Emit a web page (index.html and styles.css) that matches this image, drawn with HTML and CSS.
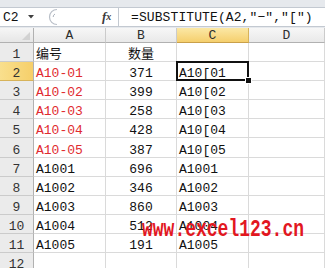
FILE: index.html
```html
<!DOCTYPE html>
<html lang="zh-CN">
<head>
<meta charset="utf-8">
<title>SUBSTITUTE</title>
<link rel="stylesheet" href="styles.css">
</head>
<body>
<div class="app">
  <div class="top-strip"></div>
  <div class="formula-bar">
    <div class="name-box">
      <span class="name">C2</span>
      <svg class="drop" width="6" height="4" viewBox="0 0 6 4"><path d="M0 0H6L3 3.5Z" fill="#404040"/></svg>
    </div>
    <div class="grip">
      <svg width="14" height="18" viewBox="0 0 14 18"><path d="M13 1.5A7.5 7.5 0 0 0 13 16.5" fill="none" stroke="#b9bfc8" stroke-width="1.2"/><path d="M11 6A3.2 3.2 0 0 0 9.2 9" fill="none" stroke="#a9b0ba" stroke-width="1"/></svg>
    </div>
    <div class="fx"><span class="f">f</span><span class="x">x</span></div>
    <div class="formula">=SUBSTITUTE(A2,″−″,″[″)</div>
  </div>
  <div class="band"></div>

  <div class="sheet">
    <div class="corner"><svg width="8" height="8" viewBox="0 0 8 8"><path d="M8 0V8H0Z" fill="#d2d2d2"/></svg></div>
    <div class="col-head">A</div>
    <div class="col-head">B</div>
    <div class="col-head selected">C</div>
    <div class="col-head">D</div>

    <div class="row-head">1</div>
    <div class="cell">编号</div><div class="cell num">数量</div><div class="cell"></div><div class="cell"></div>

    <div class="row-head selected">2</div>
    <div class="cell red">A10-01</div><div class="cell num">371</div><div class="cell active">A10[01<span class="handle"></span></div><div class="cell"></div>

    <div class="row-head">3</div>
    <div class="cell red">A10-02</div><div class="cell num">399</div><div class="cell">A10[02</div><div class="cell"></div>

    <div class="row-head">4</div>
    <div class="cell red">A10-03</div><div class="cell num">258</div><div class="cell">A10[03</div><div class="cell"></div>

    <div class="row-head">5</div>
    <div class="cell red">A10-04</div><div class="cell num">428</div><div class="cell">A10[04</div><div class="cell"></div>

    <div class="row-head">6</div>
    <div class="cell red">A10-05</div><div class="cell num">387</div><div class="cell">A10[05</div><div class="cell"></div>

    <div class="row-head">7</div>
    <div class="cell">A1001</div><div class="cell num">696</div><div class="cell">A1001</div><div class="cell"></div>

    <div class="row-head">8</div>
    <div class="cell">A1002</div><div class="cell num">346</div><div class="cell">A1002</div><div class="cell"></div>

    <div class="row-head">9</div>
    <div class="cell">A1003</div><div class="cell num">860</div><div class="cell">A1003</div><div class="cell"></div>

    <div class="row-head">10</div>
    <div class="cell">A1004</div><div class="cell num">512</div><div class="cell">A1004</div><div class="cell"></div>

    <div class="row-head">11</div>
    <div class="cell">A1005</div><div class="cell num">191</div><div class="cell">A1005</div><div class="cell"></div>

    <div class="row-head">12</div>
    <div class="cell"></div><div class="cell"></div><div class="cell"></div><div class="cell"></div>
  </div>

  <div class="watermark">www.excel123.cn</div>
</div>
</body>
</html>
```

FILE: styles.css
```css
html, body {
  margin: 0;
  padding: 0;
  background: #fff;
}

body {
  width: 325px;
  height: 268px;
  overflow: hidden;
  font-family: "Liberation Mono", "Noto Sans CJK SC", monospace;
  font-size: 13px;
  color: #111;
}

.app {
  position: relative;
  width: 325px;
  height: 268px;
  overflow: hidden;
}

/* window chrome above the formula bar */
.top-strip {
  height: 7px;
  background: #e6e9ed;
  border-bottom: 1px solid #c3c9d1;
}

.formula-bar {
  display: flex;
  height: 18px;
  background: #fff;
  border-bottom: 1px solid #c3c9d1;
}

.name-box {
  display: flex;
  align-items: flex-end;
  padding: 0 0 1px 3px;
  gap: 9px;
  box-sizing: border-box;
  width: 44px;
}

.name-box .name {
  line-height: 15px;
}

.name-box .drop {
  margin-bottom: 6px;
}

.grip {
  width: 58px;
  display: flex;
  align-items: center;
}

.fx {
  width: 17px;
  display: flex;
  align-items: flex-end;
  padding-bottom: 3px;
  box-sizing: border-box;
  border-right: 1px solid #c3c9d1;
  font-family: "Liberation Serif", serif;
  font-style: italic;
  font-weight: bold;
  color: #3a3a3a;
  line-height: 12px;
}

.fx .f {
  font-size: 13px;
}

.fx .x {
  font-size: 10px;
}

.formula {
  flex: 1;
  display: flex;
  align-items: flex-end;
  padding: 0 0 1px 12px;
  line-height: 15px;
  white-space: nowrap;
  letter-spacing: 0.1px;
}

.band {
  height: 1px;
  background: #e6e9ed;
}

/* worksheet grid */
.sheet {
  display: grid;
  grid-template-columns: 34px 72px 71px 72px 1fr;
  grid-template-rows: 15px repeat(12, 19.1px);
}

.corner,
.col-head,
.row-head,
.cell {
  box-sizing: border-box;
  white-space: nowrap;
  overflow: hidden;
  line-height: 12px;
}

.corner {
  display: flex;
  justify-content: flex-end;
  align-items: flex-end;
  padding: 0 3px 2px 0;
  background: linear-gradient(#f6f6f6, #e6e6e6);
  border-right: 1px solid #b1b1b1;
  border-bottom: 1px solid #b1b1b1;
}

.col-head {
  display: flex;
  justify-content: center;
  align-items: flex-end;
  background: linear-gradient(#f7f7f7, #e9e9e9);
  border-right: 1px solid #cbcbcb;
  border-bottom: 1px solid #b1b1b1;
  color: #2e2e2e;
}

.col-head.selected {
  background: linear-gradient(#fbe8a6, #f5cf6d);
  border-right-color: #d7b35a;
  border-bottom-color: #c9a04a;
}

.row-head {
  display: flex;
  justify-content: center;
  align-items: flex-end;
  background: #ebebeb;
  border-right: 1px solid #b1b1b1;
  border-bottom: 1px solid #cbcbcb;
  color: #333;
}

.row-head.selected {
  background: linear-gradient(90deg, #f9df8d, #f6cf6a);
  border-bottom-color: #d7b35a;
}

.cell {
  display: flex;
  align-items: flex-end;
  padding: 0 2px;
  border-right: 1px solid #dadada;
  border-bottom: 1px solid #dadada;
}

.cell.num {
  justify-content: center;
}

.cell.red {
  color: #df2b2f;
}

/* selected cell frame and fill handle drawn over the gridlines */
.cell.active {
  position: relative;
  overflow: visible;
}

.cell.active::after {
  content: "";
  position: absolute;
  left: -1px;
  top: -1px;
  right: -1px;
  bottom: -1px;
  border: 2px solid #111;
}

.handle {
  position: absolute;
  right: -4px;
  bottom: -4px;
  width: 5px;
  height: 5px;
  background: #111;
  border: 1px solid #fff;
  z-index: 1;
}

.watermark {
  position: absolute;
  left: 142px;
  top: 218px;
  font-family: "Liberation Mono", monospace;
  font-weight: bold;
  font-size: 24px;
  line-height: 24px;
  color: #e2171f;
  white-space: nowrap;
  transform: scaleX(0.75);
  transform-origin: left top;
}
```
